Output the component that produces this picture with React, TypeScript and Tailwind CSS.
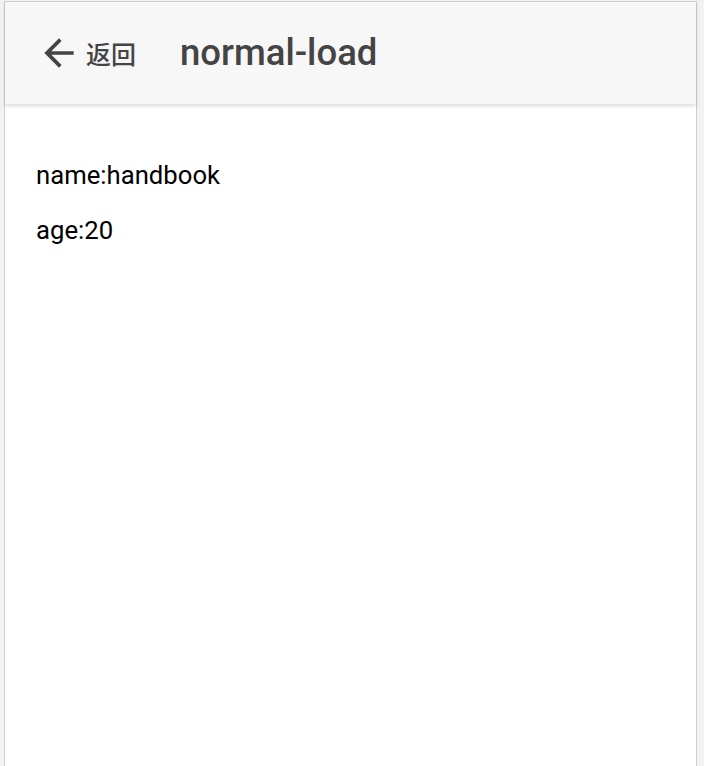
import React from "react";

export default function App() {
  return (
    <div className="h-[766px] w-[704px] bg-[#f2f2f2] pl-[4px] pt-[1px] pr-[7px] overflow-hidden" style={{ fontFamily: "Roboto, 'Noto Sans CJK SC', sans-serif" }}>
      <div className="h-[800px] border border-[#cfcfcf] bg-white">
        <div className="relative z-10 flex h-[102px] items-center bg-[#f7f7f7] shadow-[0_2px_4px_rgba(0,0,0,0.15)]">
          <div className="ml-[32px] flex items-center text-[#444]">
            <svg width="44" height="44" viewBox="0 0 24 24" className="text-[#444]">
              <path d="M20 11H7.83l5.59-5.59L12 4l-8 8 8 8 1.41-1.41L7.83 13H20v-2z" fill="currentColor" />
            </svg>
            <span className="ml-[5px] text-[25px] font-medium leading-none" style={{ fontFamily: "'Noto Sans CJK SC', sans-serif" }}>返回</span>
          </div>
          <div className="ml-[44px] text-[36.5px] font-medium leading-none text-[#444]">normal-load</div>
        </div>
        <div className="px-[31px] pt-[59px] text-[25.7px] leading-none text-black">
          <div>name:handbook</div>
          <div className="mt-[29px]">age:20</div>
        </div>
      </div>
    </div>
  );
}
